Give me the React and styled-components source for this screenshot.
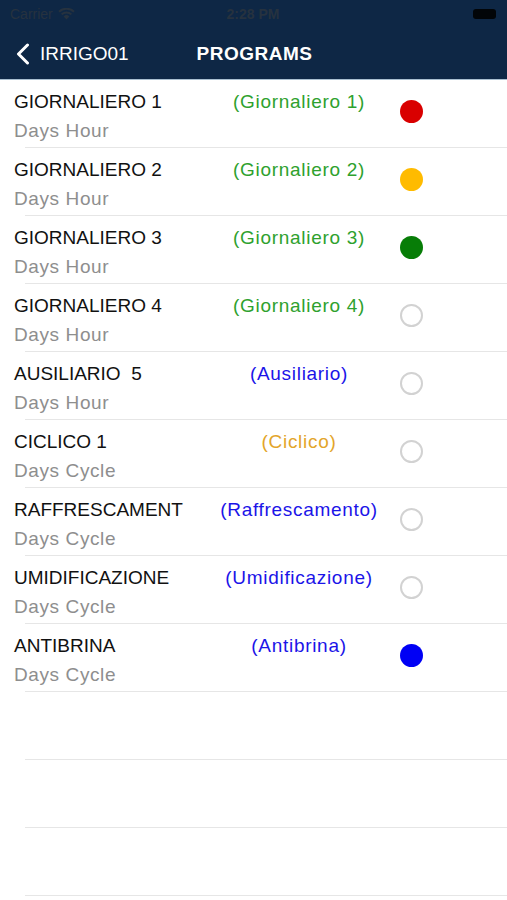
import React from "react";
import styled, { createGlobalStyle } from "styled-components";

const Global = createGlobalStyle`
  html, body { margin: 0; padding: 0; background: #fff; }
  body { font-family: "Liberation Sans", Arial, sans-serif; }
`;

const Page = styled.div`
  width: 507px;
  min-height: 900px;
  background: #fff;
  overflow: hidden;
`;

const Header = styled.header`
  background: #0e2745;
  border-bottom: 1px solid #a9bfd0;
`;

const StatusBar = styled.div`
  height: 28px;
  display: grid;
  grid-template-columns: 1fr auto 1fr;
  align-items: center;
  padding: 0 11px 0 10px;
  color: #26323f;
  font-size: 14px;
`;

const Carrier = styled.div`
  display: flex;
  align-items: center;
  gap: 5px;
`;

const Time = styled.div`
  font-weight: bold;
  font-size: 14px;
`;

const Battery = styled.div`
  justify-self: end;
  width: 23px;
  height: 10px;
  border-radius: 3px;
  background: #020508;
  margin-top: -1px;
`;

const NavBar = styled.div`
  height: 51px;
  display: grid;
  grid-template-columns: 1fr auto 1fr;
  align-items: center;
  padding: 0 14px 0 16px;
  color: #fff;
`;

const Back = styled.div`
  display: flex;
  align-items: center;
  gap: 10px;
  font-size: 19px;
`;

const Title = styled.div`
  font-weight: bold;
  font-size: 19px;
  letter-spacing: 0.5px;
`;

const List = styled.div``;

const Row = styled.div`
  position: relative;
  height: 68px;
  display: grid;
  grid-template-columns: 185px 200px 24px;
  padding-left: 14px;
  box-sizing: border-box;
  &::after {
    content: "";
    position: absolute;
    left: 25px;
    right: 0;
    bottom: 0;
    height: 1px;
    background: #e6e6e6;
  }
`;

const Names = styled.div`
  padding-top: 11px;
  display: flex;
  flex-direction: column;
  gap: 7px;
  white-space: pre;
`;

const Name = styled.div`
  font-size: 19px;
  line-height: 22px;
  color: #111;
`;

const Sub = styled.div`
  font-size: 19px;
  line-height: 22px;
  letter-spacing: 0.6px;
  color: #8e8e8e;
`;

const Tag = styled.div`
  padding-top: 11px;
  text-align: center;
  font-size: 19px;
  line-height: 22px;
  letter-spacing: 0.7px;
  color: ${(p) => p.$color};
  white-space: nowrap;
`;

const DotCell = styled.div`
  display: flex;
  justify-content: center;
  padding-top: 20px;
`;

const Dot = styled.div`
  width: 23px;
  height: 23px;
  border-radius: 50%;
  box-sizing: border-box;
  background: ${(p) => p.$fill || "transparent"};
  border: ${(p) => (p.$fill ? "none" : "2.5px solid #d2d2d2")};
`;

const GREEN = "#2ea12e";
const BLUE = "#1b14e8";
const ORANGE = "#e3a52a";

const programs = [
  { name: "GIORNALIERO 1", sub: "Days Hour", tag: "(Giornaliero 1)", color: GREEN, dot: "#d90000" },
  { name: "GIORNALIERO 2", sub: "Days Hour", tag: "(Giornaliero 2)", color: GREEN, dot: "#ffbb00" },
  { name: "GIORNALIERO 3", sub: "Days Hour", tag: "(Giornaliero 3)", color: GREEN, dot: "#077d07" },
  { name: "GIORNALIERO 4", sub: "Days Hour", tag: "(Giornaliero 4)", color: GREEN },
  { name: "AUSILIARIO  5", sub: "Days Hour", tag: "(Ausiliario)", color: BLUE },
  { name: "CICLICO 1", sub: "Days Cycle", tag: "(Ciclico)", color: ORANGE },
  { name: "RAFFRESCAMENT", sub: "Days Cycle", tag: "(Raffrescamento)", color: BLUE },
  { name: "UMIDIFICAZIONE", sub: "Days Cycle", tag: "(Umidificazione)", color: BLUE },
  { name: "ANTIBRINA", sub: "Days Cycle", tag: "(Antibrina)", color: BLUE, dot: "#0000f5" },
];

const Wifi = () => (
  <svg width="17" height="12" viewBox="0 0 17 12">
    <path d="M8.5 11.5 L5.6 8.4 A4.2 4.2 0 0 1 11.4 8.4 Z" fill="#26323f" />
    <path d="M3.6 6.4 A7 7 0 0 1 13.4 6.4" stroke="#26323f" strokeWidth="2" fill="none" />
    <path d="M1 3.7 A10.8 10.8 0 0 1 16 3.7" stroke="#26323f" strokeWidth="2" fill="none" />
  </svg>
);

const Chevron = () => (
  <svg width="14" height="22" viewBox="0 0 14 22">
    <path d="M11.5 2 L2.5 11 L11.5 20" stroke="#fff" strokeWidth="3" fill="none" strokeLinecap="round" strokeLinejoin="round" />
  </svg>
);

export default function App() {
  return (
    <Page>
      <Global />
      <Header>
        <StatusBar>
          <Carrier>
            Carrier <Wifi />
          </Carrier>
          <Time>2:28 PM</Time>
          <Battery />
        </StatusBar>
        <NavBar>
          <Back>
            <Chevron />
            IRRIGO01
          </Back>
          <Title>PROGRAMS</Title>
          <div />
        </NavBar>
      </Header>
      <List>
        {programs.map((p) => (
          <Row key={p.name}>
            <Names>
              <Name>{p.name}</Name>
              <Sub>{p.sub}</Sub>
            </Names>
            <Tag $color={p.color}>{p.tag}</Tag>
            <DotCell>
              <Dot $fill={p.dot} />
            </DotCell>
          </Row>
        ))}
        <Row />
        <Row />
        <Row />
      </List>
    </Page>
  );
}
